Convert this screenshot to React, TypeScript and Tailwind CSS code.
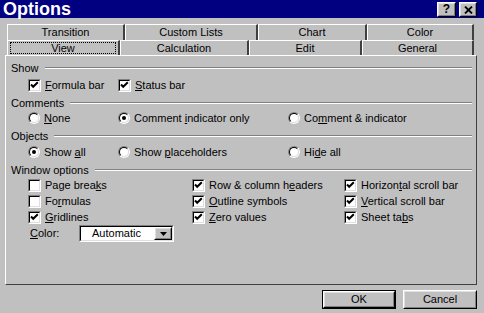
import React from "react";

const raised =
  "border border-t-white border-l-white border-b-black border-r-black";
const raisedInner =
  "border border-t-[#dfdfdf] border-l-[#dfdfdf] border-b-[#808080] border-r-[#808080]";
const sunken =
  "border border-t-[#808080] border-l-[#808080] border-b-white border-r-white";
const sunkenInner =
  "border border-t-black border-l-black border-b-[#dfdfdf] border-r-[#dfdfdf]";

function Acc({ text, at }: { text: string; at: number }) {
  return (
    <span className="whitespace-nowrap">
      {text.slice(0, at)}
      <span className="underline underline-offset-1">{text[at]}</span>
      {text.slice(at + 1)}
    </span>
  );
}

function Check({ on, text, at, w }: { on: boolean; text: string; at: number; w?: string }) {
  return (
    <div className={`flex items-center gap-[4px] ${w ?? ""}`}>
      <span className={`w-[13px] h-[13px] shrink-0 ${sunken}`}>
        <span className={`flex items-center justify-center w-full h-full bg-white ${sunkenInner}`}>
          {on && (
            <svg width="9" height="9" viewBox="0 0 9 9">
              <path d="M1 3.5 L3.2 5.8 L7.8 1.2" stroke="black" strokeWidth="2" fill="none" />
            </svg>
          )}
        </span>
      </span>
      <Acc text={text} at={at} />
    </div>
  );
}

function Radio({ on, text, at, w }: { on: boolean; text: string; at: number; w?: string }) {
  return (
    <div className={`flex items-center gap-[4px] ${w ?? ""}`}>
      <span className={`w-[12px] h-[12px] shrink-0 rounded-full ${sunken}`}>
        <span className={`flex items-center justify-center w-full h-full rounded-full bg-white ${sunkenInner}`}>
          {on && <span className="w-[4px] h-[4px] rounded-full bg-black" />}
        </span>
      </span>
      <Acc text={text} at={at} />
    </div>
  );
}

function Group({ title, cls }: { title: string; cls: string }) {
  return (
    <div className={`flex items-center pl-[5px] pr-[4px] ${cls}`}>
      <span className="whitespace-nowrap">{title}</span>
      <span className="flex-1 ml-[6px] border-t border-t-[#808080] border-b border-b-white" />
    </div>
  );
}

function Tab({ label, w, focus }: { label: string; w: string; focus?: boolean }) {
  return (
    <div className={`${w} h-full flex items-center justify-center border-t border-l border-t-white border-l-white border-r-2 border-r-[#404040] px-[2px] py-[1px]`}>
      <div
        className={`w-full h-full flex items-center justify-center ${
          focus ? "border border-dotted border-black" : ""
        }`}
      >
        {label}
      </div>
    </div>
  );
}

function Button({ label, def }: { label: string; def?: boolean }) {
  return (
    <div className={`w-[74px] h-[19px] ${def ? "border border-black" : ""}`}>
      <div className={`w-full h-full ${raised}`}>
        <div className={`w-full h-full flex items-center justify-center ${raisedInner}`}>
          {label}
        </div>
      </div>
    </div>
  );
}

export default function App() {
  return (
    <div className="w-[484px] h-[313px] bg-[#c0c0c0] text-black text-[11px] leading-[13px] font-['Liberation_Sans',Arial,sans-serif] overflow-hidden">
      {/* Title bar */}
      <div className="h-[18px] bg-[#000080] flex items-center justify-between pl-[3px] pr-[7px]">
        <span className="text-white font-bold text-[18px] leading-[18px]">Options</span>
        <div className="flex gap-[3px] pt-[1px]">
          <div className={`w-[19px] h-[15px] bg-[#c0c0c0] ${raised}`}>
            <div className={`w-full h-full flex items-center justify-center font-bold text-[12px] ${raisedInner}`}>?</div>
          </div>
          <div className={`w-[18px] h-[15px] bg-[#c0c0c0] ${raised}`}>
            <div className={`w-full h-full flex items-center justify-center ${raisedInner}`}>
              <svg width="9" height="8" viewBox="0 0 9 8">
                <path d="M1 0.5 L8 7.5 M8 0.5 L1 7.5" stroke="black" strokeWidth="1.8" />
              </svg>
            </div>
          </div>
        </div>
      </div>

      {/* Tabs */}
      <div className="ml-[7px] w-[467px] mt-[6px]">
        <div className="flex h-[16px]">
          <Tab label="Transition" w="w-[118px]" />
          <Tab label="Custom Lists" w="w-[133px]" />
          <Tab label="Chart" w="w-[109px]" />
          <Tab label="Color" w="w-[107px]" />
        </div>
        <div className="flex h-[15px]">
          <Tab label="View" w="w-[113px]" focus />
          <Tab label="Calculation" w="w-[129px]" />
          <Tab label="Edit" w="w-[113px]" />
          <Tab label="General" w="w-[112px]" />
        </div>
      </div>

      {/* Panel */}
      <div className="ml-[5px] w-[472px] h-[230px] border border-t-white border-l-white border-b-[#404040] border-r-[#404040] pt-[4px]">
        <Group title="Show" cls="h-[16px]" />
        <div className="flex items-center h-[18px] pl-[22px]">
          <Check on text="Formula bar" at={0} w="w-[90px]" />
          <Check on text="Status bar" at={0} />
        </div>

        <Group title="Comments" cls="h-[16px] mt-[1px]" />
        <div className="flex items-center h-[14px] pl-[22px]">
          <Radio on={false} text="None" at={0} w="w-[90px]" />
          <Radio on text="Comment indicator only" at={8} w="w-[170px]" />
          <Radio on={false} text="Comment & indicator" at={2} />
        </div>

        <Group title="Objects" cls="h-[16px] mt-[3px]" />
        <div className="flex items-center h-[16px] pl-[22px]">
          <Radio on text="Show all" at={5} w="w-[90px]" />
          <Radio on={false} text="Show placeholders" at={5} w="w-[170px]" />
          <Radio on={false} text="Hide all" at={2} />
        </div>

        <Group title="Window options" cls="h-[14px] mt-[3px]" />
        <div className="flex items-center h-[16px] pl-[22px]">
          <Check on={false} text="Page breaks" at={9} w="w-[164px]" />
          <Check on text="Row & column headers" at={14} w="w-[152px]" />
          <Check on text="Horizontal scroll bar" at={7} />
        </div>
        <div className="flex items-center h-[16px] pl-[22px]">
          <Check on={false} text="Formulas" at={2} w="w-[164px]" />
          <Check on text="Outline symbols" at={0} w="w-[152px]" />
          <Check on text="Vertical scroll bar" at={0} />
        </div>
        <div className="flex items-center h-[16px] pl-[22px]">
          <Check on text="Gridlines" at={0} w="w-[164px]" />
          <Check on text="Zero values" at={0} w="w-[152px]" />
          <Check on text="Sheet tabs" at={8} />
        </div>
        <div className="flex items-center h-[17px] pl-[24px]">
          <span className="w-[49px]">
            <Acc text="Color:" at={0} />
          </span>
          <div className={`w-[95px] h-[17px] ${sunken}`}>
            <div className={`w-full h-full flex bg-white ${sunkenInner}`}>
              <span className="flex-1 flex items-center pl-[11px]">Automatic</span>
              <div className={`w-[18px] h-full bg-[#c0c0c0] ${raised}`}>
                <div className={`w-full h-full flex items-center justify-center ${raisedInner}`}>
                  <svg width="7" height="4" viewBox="0 0 7 4">
                    <path d="M0 0 H7 L3.5 4 Z" fill="black" />
                  </svg>
                </div>
              </div>
            </div>
          </div>
        </div>
      </div>

      {/* Buttons */}
      <div className="flex justify-end gap-[7px] pr-[7px] mt-[5px]">
        <Button label="OK" def />
        <Button label="Cancel" />
      </div>
    </div>
  );
}
